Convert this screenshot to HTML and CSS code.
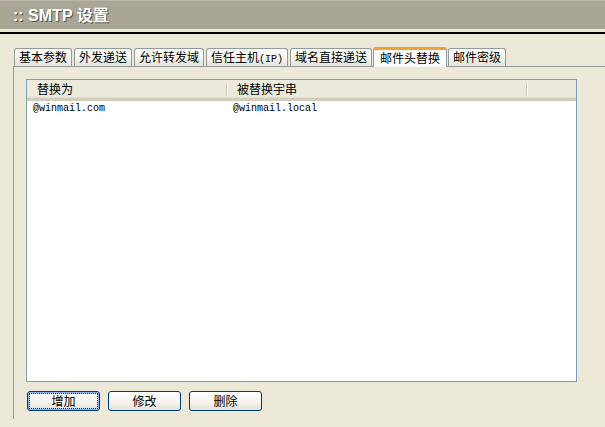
FILE: index.html
```html
<!DOCTYPE html>
<html>
<head>
<meta charset="utf-8">
<link rel="stylesheet" href="styles.css">
</head>
<body>
<div class="titlebar">:: SMTP 设置</div>
<div class="rule"></div>
<div class="tabs">
  <div class="tab">基本参数</div>
  <div class="tab">外发递送</div>
  <div class="tab">允许转发域</div>
  <div class="tab">信任主机<span class="half">(IP)</span></div>
  <div class="tab">域名直接递送</div>
  <div class="tab active">邮件头替换</div>
  <div class="tab">邮件密级</div>
</div>
<div class="panel">
  <div class="list">
    <div class="lhead">
      <div class="hcol c1">替换为</div>
      <div class="hcol c2">被替换宇串</div>
      <div class="hcol c3"></div>
    </div>
    <div class="row">
      <div class="cell c1">@winmail.com</div>
      <div class="cell c2">@winmail.local</div>
    </div>
  </div>
  <div class="buttons">
    <button class="btn focus"><span>增加</span></button>
    <button class="btn"><span>修改</span></button>
    <button class="btn"><span>删除</span></button>
  </div>
</div>
</body>
</html>
```
FILE: styles.css
```css
html, body {
  margin: 0;
  padding: 0;
}
body {
  background: #ece9d8;
  font-family: "Noto Sans CJK SC", "Liberation Sans", sans-serif;
  font-size: 12px;
  color: #000;
  width: 605px;
  height: 427px;
  overflow: hidden;
}
.titlebar {
  height: 29px;
  line-height: 30px;
  background: #a9a696;
  border-top: 1px solid #b8b5a6;
  box-sizing: border-box;
  padding-left: 13px;
  color: #fff;
  font-family: "Liberation Sans", "Noto Sans CJK SC", sans-serif;
  font-weight: bold;
  font-size: 16px;
  text-shadow: 1px 1px 0 #55544a;
}
.rule {
  margin-top: 3px;
  height: 2px;
  background: #000;
}
.tabs {
  display: flex;
  align-items: flex-end;
  gap: 2px;
  margin-top: 13px;
  padding-left: 14px;
  height: 19px;
  position: relative;
  z-index: 1;
}
.tab {
  height: 18px;
  box-sizing: border-box;
  border: 1px solid #919b9c;
  border-bottom: none;
  border-radius: 3px 3px 0 0;
  background: linear-gradient(#ffffff, #f3f2ec 60%, #e4e2d8);
  padding: 0 4px;
  line-height: 16px;
  font-size: 12px;
  white-space: nowrap;
}
.tab .half {
  font-family: "Liberation Mono", monospace;
  font-size: 10px;
}
.tab.active {
  height: 20px;
  margin-bottom: -1px;
  padding: 0 6px;
  background: #fcfcfe;
  border-top: 3px solid #f5b342;
  border-color: #f0a235 #919b9c #919b9c #919b9c;
  line-height: 15px;
  margin-left: -1px;
  margin-right: -1px;
}
.panel {
  margin-left: 13px;
  border-top: 1px solid #919b9c;
  border-left: 1px solid #919b9c;
  padding: 12px 0 0 12px;
  height: 340px;
}
.list {
  width: 551px;
  height: 303px;
  box-sizing: border-box;
  border: 1px solid #7f9db9;
  background: #fff;
}
.lhead {
  display: flex;
  height: 21px;
  box-sizing: border-box;
  background: #ebeadb;
  border-bottom: 3px solid #d0cdbd;
  box-shadow: inset 0 -1px 0 #e2e0d0;
}
.hcol {
  line-height: 18px;
  padding-left: 10px;
  box-sizing: border-box;
  position: relative;
}
.hcol.c1 { width: 200px; }
.hcol.c2 { width: 300px; }
.hcol.c3 { flex: 1; }
.hcol.c1::after,
.hcol.c2::after {
  content: "";
  position: absolute;
  right: 0;
  top: 4px;
  bottom: 2px;
  width: 1px;
  background: #c7c5b2;
  box-shadow: 1px 0 0 #fff;
}
.row {
  display: flex;
  height: 14px;
  margin-top: 1px;
  font-family: "Liberation Mono", "DejaVu Sans Mono", monospace;
  font-size: 10px;
  line-height: 14px;
}
.cell {
  padding-left: 6px;
  box-sizing: border-box;
}
.cell.c1 { width: 200px; }
.cell.c2 { width: 300px; }
.buttons {
  display: flex;
  gap: 8px;
  margin-top: 9px;
  padding-left: 1px;
}
.btn {
  width: 73px;
  height: 20px;
  box-sizing: border-box;
  border: 1px solid #003c74;
  border-radius: 3px;
  background: linear-gradient(#ffffff, #f4f3ee 60%, #e3e1d7);
  font-family: "Noto Sans CJK SC", sans-serif;
  font-size: 12px;
  line-height: 16px;
  padding: 0;
  color: #000;
}
.btn.focus {
  box-shadow: inset 0 0 0 1px #8eb1e8, inset 0 0 0 2px #b9d1f5;
}
.btn.focus span {
  display: block;
  margin: 1px;
  line-height: 14px;
  border: 1px dotted #333;
}
```
